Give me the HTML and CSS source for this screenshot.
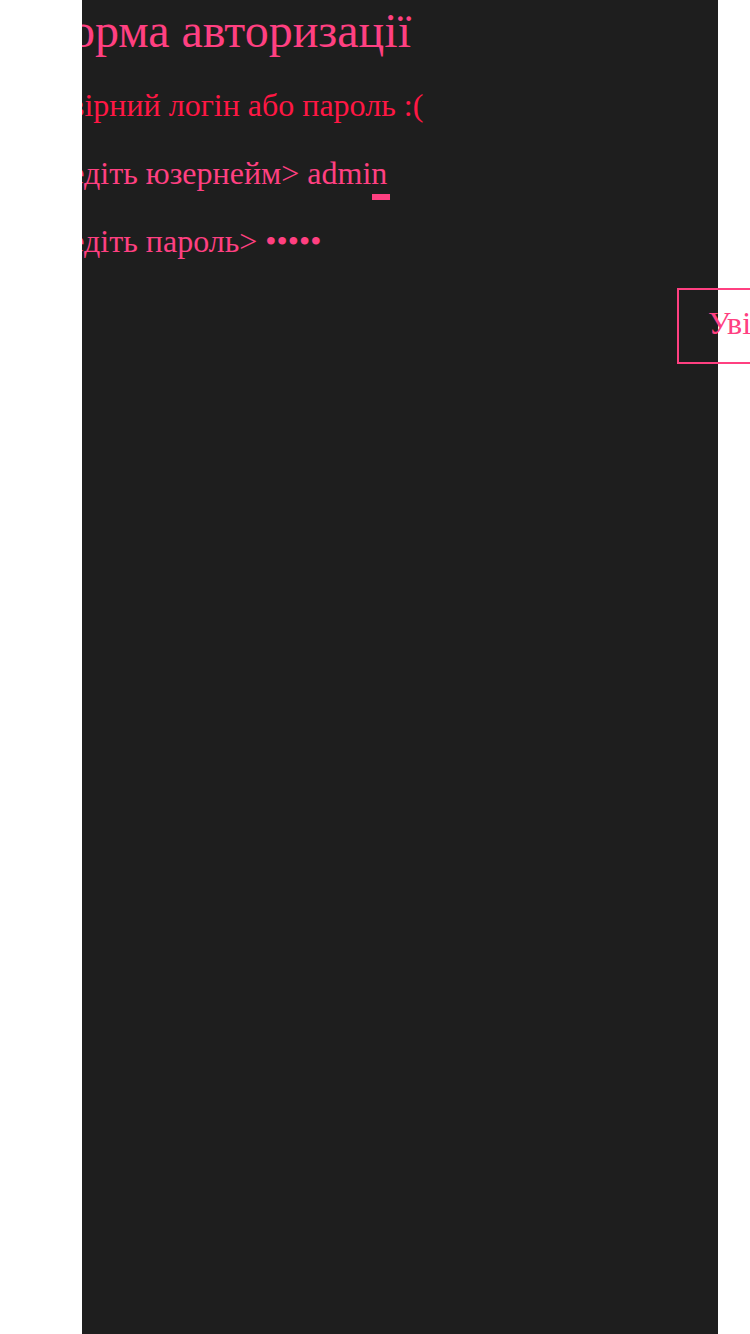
FILE: index.html
```html
<!DOCTYPE html>
<html lang="uk">
<head>
<meta charset="utf-8">
<title>Форма авторизації</title>
<link rel="stylesheet" href="styles.css">
</head>
<body>
<div class="panel">
  <div class="content">
    <h1 class="title">Форма авторизації</h1>
    <p class="error">Невірний логін або пароль :(</p>
    <p class="line">Введіть юзернейм&gt; <span class="value">admi<span class="cursor">n</span></span></p>
    <p class="line">Введіть пароль&gt; <span class="dots">•••••</span></p>
    <div class="actions">
      <button class="submit" type="button">Увійти</button>
    </div>
  </div>
</div>
</body>
</html>
```
FILE: styles.css
```css
html, body {
  margin: 0;
  padding: 0;
  background: #ffffff;
}
.panel {
  margin-left: 82px;
  width: 636px;
  height: 1334px;
  background: #1e1e1e;
  clip-path: inset(0 -200px 0 0);
  font-family: "Liberation Serif", "Times New Roman", serif;
}
.content {
  margin-left: -48px;
  padding-top: 1px;
}
.title {
  margin: 0 0 0 -1px;
  font-size: 48px;
  font-weight: normal;
  line-height: 60px;
  color: #ff4081;
}
.error {
  margin: 10px 0 0 -2px;
  font-size: 32px;
  line-height: 68px;
  color: #ff1744;
}
.line {
  margin: 0;
  font-size: 32px;
  line-height: 68px;
  color: #ff4081;
}
.cursor {
  position: relative;
  display: inline-block;
}
.cursor::after {
  content: "";
  position: absolute;
  left: 1px;
  width: 18px;
  bottom: 7px;
  height: 6px;
  background: #ff4081;
}
.actions {
  margin-top: 13px;
  padding-left: 643px;
}
.submit {
  box-sizing: border-box;
  width: 140px;
  height: 76px;
  border: 2px solid #ff4081;
  background: transparent;
  color: #ff4081;
  font-family: "Liberation Serif", "Times New Roman", serif;
  font-size: 32px;
  padding: 0 0 5px 29px;
  text-align: left;
}
```
